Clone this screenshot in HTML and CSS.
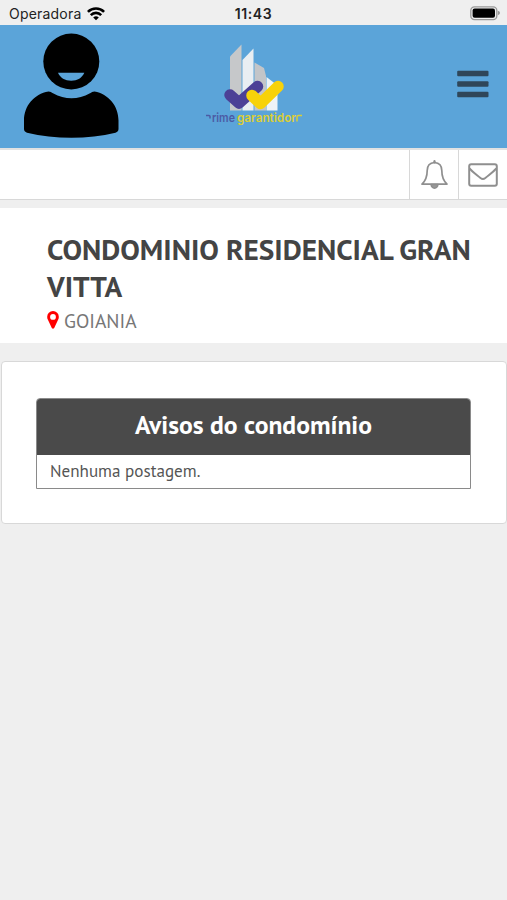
FILE: index.html
```
<!DOCTYPE html>
<html lang="pt-br">
<head>
    <meta charset="UTF-8">
    <meta name="viewport" content="width=device-width, initial-scale=1.0">
    <title>Avisos do condomínio</title>
    <link rel="stylesheet" href="styles.css">
</head>
<body>
    <div class="status-bar">
        <div class="carrier">
            <span>Operadora</span>
            <svg width="18" height="14" viewBox="0 0 18 14" fill="none" stroke="#000" stroke-width="2.6">
                <path d="M0.9 4.9a11.4 11.4 0 0 1 16.2 0"/>
                <path d="M3.8 8.1a7.3 7.3 0 0 1 10.4 0"/>
                <path d="M6.2 10.5a4 4 0 0 1 5.6 0L9 13.3z" fill="#000" stroke="none"/>
            </svg>
        </div>
        <span class="time">11:43</span>
        <svg class="battery" width="30" height="15" viewBox="0 0 30 15">
            <rect x="0.8" y="0.8" width="26" height="12.8" rx="3.6" fill="none" stroke="#999" stroke-width="1.3"/>
            <rect x="2.6" y="2.6" width="22.4" height="9.2" rx="2" fill="#000"/>
            <path d="M27.8 4.8q2.2 .6 2.2 2.2t-2.2 2.2z" fill="#999"/>
        </svg>
    </div>

    <header class="header">
        <svg class="avatar" width="96" height="106" viewBox="0 0 96 106">
            <circle cx="47.3" cy="28.5" r="28"/>
            <path d="M34 39.7h26.3c-2 5-7 8-13.1 8s-11.2-3-13.2-8z" fill="#5ba4d9"/>
            <path d="M24.5 58.5C10 61 0 73 0 87.5v8.5c0 2 1 3 3 3.700 28 6.600 61 6.600 88.500 0 2-.7 3-1.700 3-3.700v-8.500C94.500 73 84.500 61 70.500 58.500c-2 0-3 1-4.500 1.700-12 6.800-25 6.800-37 0-1.500-.7-2.500-1.700-4.500-1.700z"/>
        </svg>
        <svg class="logo" width="100" height="86" viewBox="0 0 100 86">
            <path d="M26 12.500L37.500 .5v66H26z" fill="#c6c8ca"/>
            <path d="M38.500 16L49.500 4.500v62h-11z" fill="#e9eef2"/>
            <path d="M50.500 18.500L60 24l2 8v34.500H50.500z" fill="#c3c5c8"/>
            <path d="M62.500 33l11 8.500v25h-11z" fill="#eef3f7"/>
            <path d="M26 51l9 8 18.500-16.500" fill="none" stroke="#4c4096" stroke-width="11.5" stroke-linecap="round" stroke-linejoin="round"/>
            <path d="M48 51.500l8.500 8L74 42.500" fill="none" stroke="#f7d20a" stroke-width="11.5" stroke-linecap="round" stroke-linejoin="round"/>
            <path d="M2 71.500h3q1 0 1 1v2" fill="none" stroke="#4c5ba5" stroke-width="1.5"/>
            <text x="8" y="77.500" textLength="23" lengthAdjust="spacingAndGlyphs" fill="#4c5ba5">rime</text>
            <text x="33" y="77.500" textLength="59" lengthAdjust="spacingAndGlyphs" fill="#dcce35">garantidor</text>
            <path d="M93 77.500v-4.500q0-1.500 1.500-1.500H98" fill="none" stroke="#dcce35" stroke-width="1.5"/>
        </svg>
        <svg class="menu-icon" width="32" height="28" viewBox="0 0 32 28" fill="#2f4659">
            <rect x="0.2" y="0.7" width="31.3" height="5.6" rx="1"/>
            <rect x="0.2" y="11.2" width="31.3" height="5.6" rx="1"/>
            <rect x="0.2" y="21.7" width="31.3" height="5.6" rx="1"/>
        </svg>
    </header>

    <nav class="toolbar">
        <div class="tool">
            <svg width="27" height="30" viewBox="0 0 27 30" fill="none" stroke="#8f8f8f" stroke-width="1.7" stroke-linejoin="round">
                <path d="M13.5 2.5c-4.7.4-7.3 3.6-7.3 8 0 6.2-1.5 10.2-5.2 13.6h25c-3.7-3.4-5.2-7.4-5.2-13.6 0-4.400-2.600-7.600-7.300-8z"/>
                <path d="M13.5 2.5V1.2" stroke-width="2.2" stroke-linecap="round"/>
                <path d="M10.2 24.5a3.3 3.6 0 0 0 6.6 0z" fill="#999"/>
            </svg>
        </div>
        <div class="tool">
            <svg width="30" height="24" viewBox="0 0 30 24" fill="none" stroke="#8f8f8f" stroke-width="2" stroke-linejoin="round">
                <rect x="1.2" y="1.2" width="27.6" height="21.6" rx="2"/>
                <path d="M1.5 5.500c3.500 4 7.500 6.500 11 9.500q2.400 1.900 4.800 0c3.500-3 7.500-5.500 11-9.500"/>
            </svg>
        </div>
    </nav>

    <section class="condo">
        <h1>CONDOMINIO RESIDENCIAL GRAN VITTA</h1>
        <div class="city">
            <svg width="12" height="18" viewBox="0 0 12 18">
                <path fill="#f00" fill-rule="evenodd" d="M6 0a5.8 5.8 0 0 0-5.8 5.9c0 1 .2 1.9.6 2.7l4 8.4q1.2 1.5 2.4 0l4-8.4c.4-.8.6-1.7.6-2.7A5.8 5.8 0 0 0 6 0zm0 3a2.900 2.900 0 1 1 0 5.800A2.900 2.900 0 0 1 6 3z"/>
            </svg>
            <span>GOIANIA</span>
        </div>
    </section>

    <main class="card">
        <div class="panel">
            <h2>Avisos do condomínio</h2>
            <p>Nenhuma postagem.</p>
        </div>
    </main>
</body>
</html>
```
FILE: styles.css
```
* {
    margin: 0;
    padding: 0;
    box-sizing: border-box;
}

body {
    font-family: "PT Sans", "Noto Sans", sans-serif;
    background-color: #efefef;
    color: #444;
}

svg {
    display: block;
    flex-shrink: 0;
}

.status-bar {
    display: grid;
    grid-template-columns: 1fr auto 1fr;
    align-items: center;
    height: 25px;
    padding: 2px 7px 0 9px;
    font-family: Inter, sans-serif;
    font-size: 14px;
    color: #222;
}

.carrier {
    display: flex;
    align-items: center;
    gap: 6px;
    letter-spacing: 0.2px;
}

.time {
    margin-right: 2px;
    font-weight: 600;
    letter-spacing: 0.6px;
}

.battery {
    justify-self: end;
}

.header {
    display: grid;
    grid-template-columns: 1fr auto 1fr;
    align-items: start;
    height: 123px;
    padding: 8px 18px 0 24px;
    background-color: #5ba4d9;
}

.logo {
    margin: 11px 5px 0 0;
    font-family: Inter, sans-serif;
    font-size: 12px;
    font-weight: 600;
}

.menu-icon {
    justify-self: end;
    margin-top: 37px;
}

.toolbar {
    display: flex;
    justify-content: flex-end;
    height: 52px;
    background-color: #fff;
    border-top: 2px solid #e2e2e2;
    border-bottom: 1px solid #d8d8d8;
}

.tool {
    display: flex;
    align-items: center;
    justify-content: center;
    width: 49px;
    border-left: 1px solid #d8d8d8;
}

.condo {
    height: 135px;
    margin-top: 8px;
    padding: 23px 30px 0 47px;
    background-color: #fff;
}

h1 {
    font-size: 29.3px;
    line-height: 37px;
}

.city {
    display: flex;
    align-items: center;
    gap: 5px;
    height: 30px;
    font-size: 19.5px;
    color: #777;
}

.card {
    height: 163px;
    margin: 18px 0 0 1px;
    padding: 36px 35px 36px 34px;
    background-color: #fff;
    border: 1px solid #d8d8d8;
    border-radius: 4px;
}

.panel {
    height: 91px;
    border: 1px solid #8a8a8a;
    border-radius: 4px 4px 0 0;
}

h2 {
    height: 56px;
    background-color: #4a4a4a;
    border-radius: 3px 3px 0 0;
    color: #fff;
    font-size: 25.6px;
    line-height: 52px;
    text-align: center;
}

p {
    padding-left: 13px;
    font-size: 17.1px;
    line-height: 33px;
    color: #555;
}
```
